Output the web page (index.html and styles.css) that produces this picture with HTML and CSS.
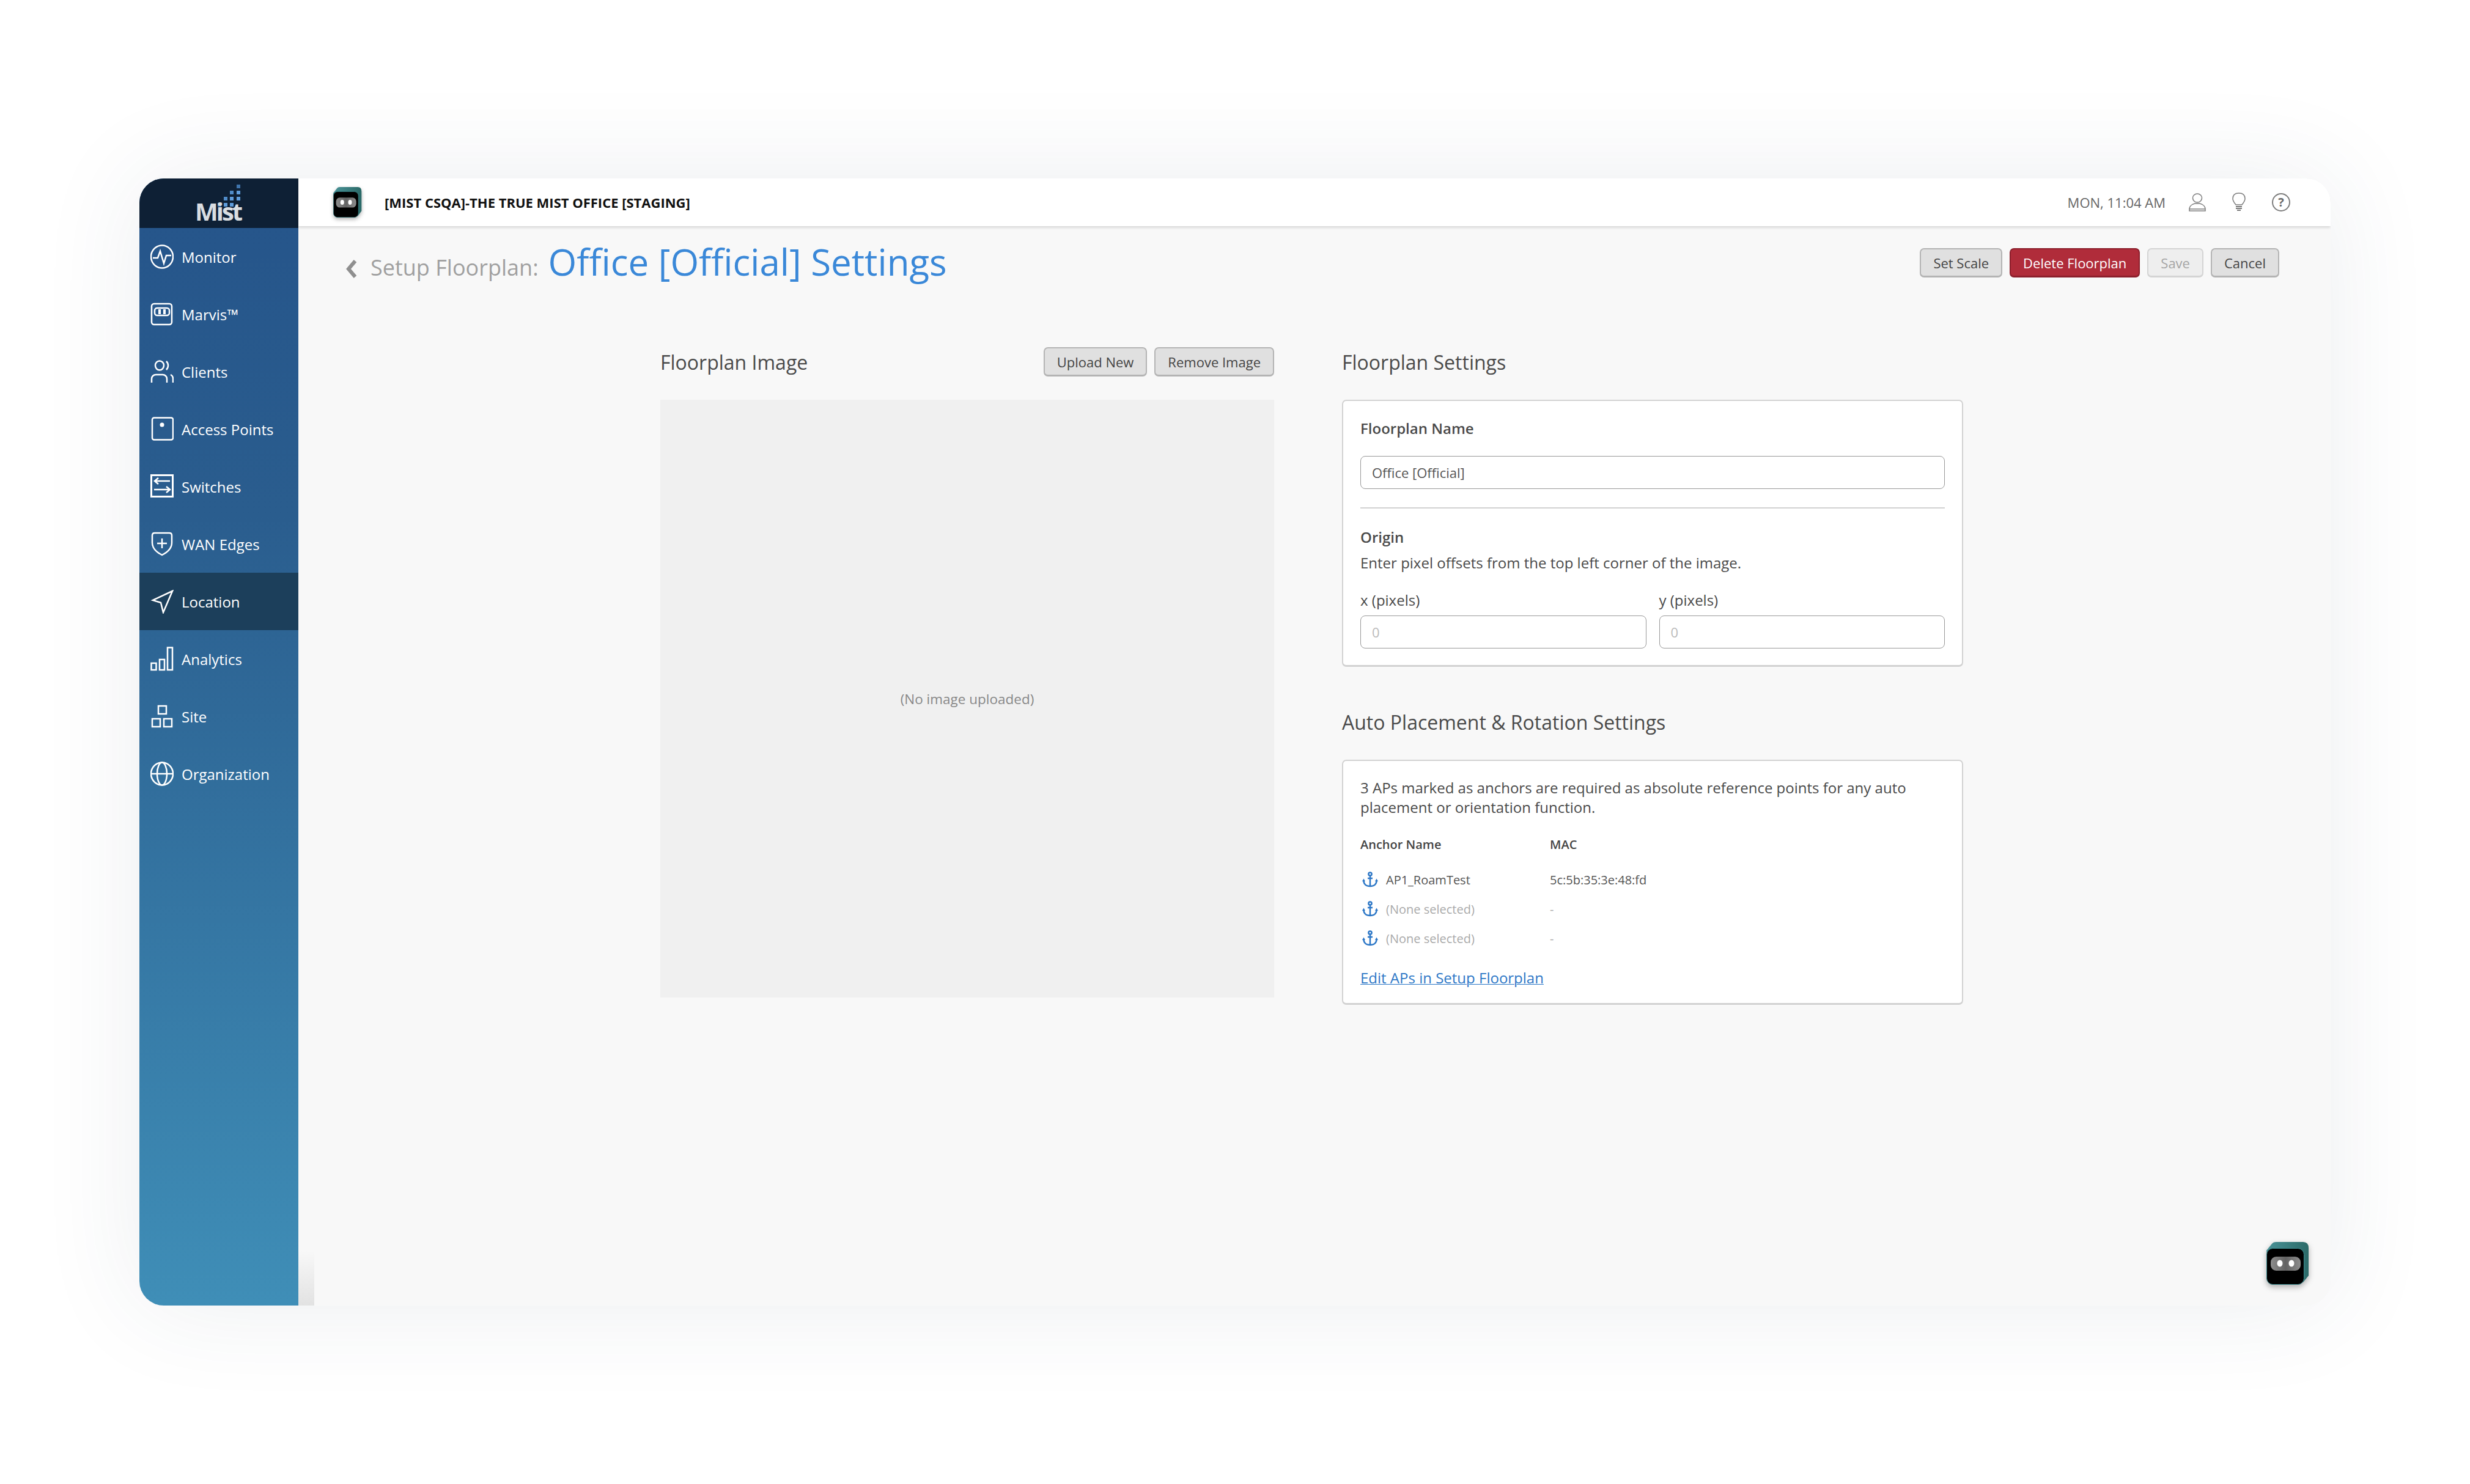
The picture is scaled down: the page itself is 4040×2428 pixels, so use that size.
FILE: index.html
```html
<!DOCTYPE html>
<html lang="en">
<head>
  <meta charset="UTF-8" />
  <title>Setup Floorplan: Office [Official] Settings</title>
  <link rel="stylesheet" href="styles.css">
</head>
<body>
  <svg class="defs" width="0" height="0" aria-hidden="true">
    <defs>
      <linearGradient id="bot-top" x1="0" y1="0" x2="1" y2="0">
        <stop offset="0" stop-color="#4a9398" />
        <stop offset="1" stop-color="#2b6a68" />
      </linearGradient>
      <linearGradient id="bot-visor" x1="0" y1="0" x2="1" y2="0">
        <stop offset="0" stop-color="#8d8d8d" />
        <stop offset=".5" stop-color="#636363" />
        <stop offset="1" stop-color="#8d8d8d" />
      </linearGradient>
      <symbol id="bot" viewBox="0 0 70 70">
        <path d="M0 14 L9 3 Q11 0 16 0 H60 Q69 0 69 10 V55 L60 66 H10 Z" fill="url(#bot-top)" />
        <rect x="0.5" y="10.5" width="61" height="59" rx="10" fill="#000" stroke="#3d8d92" />
        <rect x="7" y="24" width="49" height="23" rx="9" fill="url(#bot-visor)" />
        <ellipse cx="22" cy="35" rx="4.5" ry="5.5" fill="#fff" />
        <ellipse cx="41" cy="35" rx="4.5" ry="5.5" fill="#fff" />
      </symbol>
      <symbol id="anchor" viewBox="0 0 26 26">
        <g fill="none" stroke="#2e78c7" stroke-width="2.500">
          <circle cx="13" cy="4" r="2.6" />
          <path d="M13 7v17M9 11h8M2.5 15c0 5.5 4 9 10.500 9s10.500-3.500 10.500-9" />
        </g>
        <path d="M2.500 11.500 0 16h5zM23.500 11.500 21 16h5z" fill="#2e78c7" />
      </symbol>
    </defs>
  </svg>

  <div class="app">
    <aside class="sidebar">
      <div class="logo">
        <svg class="logo-dots" width="40" height="38" viewBox="0 0 40 38">
          <rect x="32" y="0" width="6" height="6" fill="#3f74ac" />
          <rect x="21" y="10" width="6" height="6" fill="#4f8bc8" />
          <rect x="32" y="10" width="6" height="6" fill="#5f9ddc" />
          <rect x="11" y="20" width="6" height="6" fill="#4f8bc8" />
          <rect x="21" y="20" width="6" height="6" fill="#5f9ddc" />
          <rect x="32" y="20" width="6" height="6" fill="#5f9ddc" />
          <rect x="1" y="30" width="6" height="6" fill="#4f8bc8" />
          <rect x="11" y="30" width="6" height="6" fill="#5f9ddc" />
          <rect x="21" y="30" width="6" height="6" fill="#5f9ddc" />
        </svg>
        <span class="logo-text">Mist</span>
      </div>
      <nav class="nav">
        <a class="nav-item">
          <svg class="nav-icon" viewBox="0 0 38 40"><ellipse cx="19" cy="20" rx="18" ry="18.500" /><path d="M4 22h8l4-11 6 20 4-13h8" /></svg>
          Monitor
        </a>
        <a class="nav-item">
          <svg class="nav-icon" viewBox="0 0 38 40"><rect x="2" y="3" width="33" height="34" rx="4" /><rect x="7" y="10" width="24" height="12" rx="4" /><path d="M15 12v8M23 12v8" stroke-width="4" /></svg>
          Marvis™
        </a>
        <a class="nav-item">
          <svg class="nav-icon" viewBox="0 0 38 40"><ellipse cx="15" cy="10" rx="7" ry="7.500" /><path d="M26 3c4 4 4 10 0 14M2 38v-6c0-4 3-7 7-7h11c4 0 7 3 7 7v6M33 25c2 1 4 3 4 7v6" /></svg>
          Clients
        </a>
        <a class="nav-item">
          <svg class="nav-icon" viewBox="0 0 38 40"><rect x="3" y="1.500" width="34" height="36" rx="3" /><circle cx="19" cy="13" r="3.500" fill="#fff" stroke="none" /></svg>
          Access Points
        </a>
        <a class="nav-item">
          <svg class="nav-icon" viewBox="0 0 38 40"><rect x="1.500" y="1.500" width="35" height="35" stroke-width="3" /><path d="M32 11H7M13 6l-6 5 6 5M6 25h26M26 20l6 5-6 5" stroke-width="2.500" /></svg>
          Switches
        </a>
        <a class="nav-item">
          <svg class="nav-icon" viewBox="0 0 38 40"><path d="M3 6q0-4 4-4h24q4 0 4 4v12c0 8-6 15-16 20C9 33 3 26 3 18z" /><path d="M11 19h16M19 11v16" /></svg>
          WAN Edges
        </a>
        <a class="nav-item is-active">
          <svg class="nav-icon" viewBox="0 0 38 40"><path d="M36 3 4 18l13 4 4 16z" /></svg>
          Location
        </a>
        <a class="nav-item">
          <svg class="nav-icon" viewBox="0 0 38 40"><rect x="1.500" y="27" width="8" height="11" /><rect x="15" y="21" width="8" height="17" /><rect x="28" y="1.500" width="8" height="36.500" /></svg>
          Analytics
        </a>
        <a class="nav-item">
          <svg class="nav-icon" viewBox="0 0 38 40"><rect x="13" y="3" width="13" height="13" /><rect x="3" y="24" width="13" height="13" /><rect x="22" y="24" width="13" height="13" /></svg>
          Site
        </a>
        <a class="nav-item">
          <svg class="nav-icon" viewBox="0 0 38 40"><ellipse cx="19" cy="20" rx="18" ry="18.500" /><ellipse cx="19" cy="20" rx="8" ry="18.500" /><path d="M1 20h36" /></svg>
          Organization
        </a>
      </nav>
    </aside>

    <div class="main">
      <header class="topbar">
        <svg class="topbar-bot" viewBox="0 0 70 70" preserveAspectRatio="none"><use href="#bot" /></svg>
        <span class="org-name">[MIST CSQA]-THE TRUE MIST OFFICE [STAGING]</span>
        <span class="clock">MON, 11:04 AM</span>
        <svg class="top-icon user" viewBox="0 0 28 30"><ellipse cx="14" cy="8" rx="7.500" ry="7" /><path d="M1 29v-3c0-5 5-8 9-9h8c4 1 9 4 9 9v3zM1 26h26" /></svg>
        <svg class="top-icon bulb" viewBox="0 0 22 32"><path d="M6 20C3 16 1 14 1 10 1 4 5 1 11 1s10 3 10 9c0 4-2 6-5 10z" /><path d="M6 23h10M6 26h10M8 29h6" stroke-width="2" /></svg>
        <span class="help">?</span>
      </header>

      <div class="page-head">
        <div class="crumbs">
          <svg class="back" width="19" height="30" viewBox="0 0 19 30"><path d="M15 2 4 15l11 13" /></svg>
          <span class="crumb-parent">Setup Floorplan:</span>
          <h1 class="crumb-title">Office [Official] Settings</h1>
        </div>
        <div class="btn-row">
          <button class="btn">Set Scale</button>
          <button class="btn btn-danger">Delete Floorplan</button>
          <button class="btn btn-disabled">Save</button>
          <button class="btn">Cancel</button>
        </div>
      </div>

      <div class="columns">
        <section class="col-image">
          <div class="section-head">
            <h2>Floorplan Image</h2>
            <div class="btn-row">
              <button class="btn">Upload New</button>
              <button class="btn">Remove Image</button>
            </div>
          </div>
          <div class="image-box">(No image uploaded)</div>
        </section>

        <section class="col-settings">
          <div class="section-head">
            <h2>Floorplan Settings</h2>
          </div>
          <div class="card card-settings">
            <div class="field-title">Floorplan Name</div>
            <div class="input">Office [Official]</div>
            <hr class="divider">
            <div class="field-title origin">Origin</div>
            <p class="hint">Enter pixel offsets from the top left corner of the image.</p>
            <div class="xy">
              <label class="xy-field">x (pixels)<span class="input is-empty">0</span></label>
              <label class="xy-field">y (pixels)<span class="input is-empty">0</span></label>
            </div>
          </div>

          <div class="section-head second">
            <h2>Auto Placement &amp; Rotation Settings</h2>
          </div>
          <div class="card card-auto">
            <p class="intro">3 APs marked as anchors are required as absolute reference points for any auto placement or orientation function.</p>
            <div class="anchor-row anchor-head">
              <span class="anchor-name">Anchor Name</span>
              <span>MAC</span>
            </div>
            <div class="anchor-row">
              <span class="anchor-name"><svg class="anchor-icon"><use href="#anchor" /></svg>AP1_RoamTest</span>
              <span>5c:5b:35:3e:48:fd</span>
            </div>
            <div class="anchor-row is-none">
              <span class="anchor-name"><svg class="anchor-icon"><use href="#anchor" /></svg>(None selected)</span>
              <span>-</span>
            </div>
            <div class="anchor-row is-none">
              <span class="anchor-name"><svg class="anchor-icon"><use href="#anchor" /></svg>(None selected)</span>
              <span>-</span>
            </div>
            <a class="edit-link">Edit APs in Setup Floorplan</a>
          </div>
        </section>
      </div>

      <div class="side-fade"></div>
      <svg class="chat-bot" viewBox="0 0 70 70"><use href="#bot" /></svg>
    </div>
  </div>
</body>
</html>
```

FILE: styles.css
```css
* {
  box-sizing: border-box;
}
html, body {
  margin: 0;
  background-color: #fff;
}
body {
  font-family: "Open Sans", "Noto Sans", sans-serif;
  color: #4a4a4a;
  padding: 292px 228px;
  width: 4040px;
  height: 2428px;
}
.defs {
  position: absolute;
}
.app {
  display: flex;
  height: 1844px;
  border-radius: 40px;
  background-color: #f8f8f8;
  box-shadow: 0 0 170px rgba(40, 70, 90, 0.09);
  overflow: hidden;
}

/* sidebar */
.sidebar {
  width: 260px;
  flex: none;
  display: flex;
  flex-direction: column;
  background: linear-gradient(180deg, #25548a 0%, #2a5d8e 30%, #3f8eb7 100%);
}
.logo {
  height: 81px;
  background-color: #0e2035;
  position: relative;
  text-align: center;
}
.logo-dots {
  position: absolute;
  left: 127px;
  top: 10px;
}
.logo-text {
  position: absolute;
  left: 91px;
  top: 27px;
  font-size: 40px;
  line-height: 54px;
  font-weight: 700;
  color: #d9dde1;
  letter-spacing: -3px;
}
.nav-item {
  height: 94px;
  display: flex;
  align-items: center;
  gap: 13px;
  padding-left: 18px;
  color: #fff;
  font-size: 24px;
}
.nav-item.is-active {
  background-color: #1c3f5b;
}
.nav-icon {
  width: 38px;
  height: 40px;
  flex: none;
  fill: none;
  stroke: #fff;
  stroke-width: 2.500;
}

/* main column */
.main {
  flex: 1;
  position: relative;
}
.topbar {
  height: 78px;
  background-color: #fff;
  box-shadow: 0 2px 5px rgba(0, 0, 0, 0.16);
  display: flex;
  align-items: center;
  padding: 0 66px 0 57px;
  position: relative;
}
.topbar-bot {
  width: 47px;
  height: 50px;
  margin-right: 37px;
  filter: drop-shadow(0 3px 3px rgba(0, 0, 0, 0.3));
}
.org-name {
  font-size: 22px;
  font-weight: 700;
  color: #111;
  flex: 1;
}
.clock {
  font-size: 22px;
  color: #666;
  margin-right: 38px;
}
.top-icon {
  fill: none;
  stroke: #7d7d7d;
  stroke-width: 1.5;
}
.top-icon.user {
  width: 28px;
  height: 30px;
  margin-right: 43px;
}
.top-icon.bulb {
  width: 22px;
  height: 32px;
  margin-right: 43px;
}
.help {
  width: 30px;
  height: 30px;
  border: 2px solid #7d7d7d;
  border-radius: 50%;
  color: #6a6a6a;
  font-size: 20px;
  font-weight: 700;
  line-height: 26px;
  text-align: center;
}
.page-head {
  display: flex;
  justify-content: space-between;
  align-items: flex-start;
  padding: 36px 84px 0 78px;
  height: 198px;
}
.crumbs {
  display: flex;
  align-items: baseline;
  line-height: 48px;
  margin-top: -2px;
}
.back {
  fill: none;
  stroke: #8f8f8f;
  stroke-width: 6;
  margin-right: 21px;
  align-self: center;
  position: relative;
  top: 7px;
}
.crumb-parent {
  font-size: 36px;
  color: #a0a0a0;
  margin-right: 16px;
}
.crumb-title {
  margin: 0;
  font-size: 60px;
  line-height: 48px;
  font-weight: 400;
  color: #3a88d8;
}
.btn-row {
  display: flex;
  gap: 12px;
}
.btn {
  height: 48px;
  padding: 0 20px;
  font-family: inherit;
  font-size: 22px;
  color: #444;
  background-color: #e0e0e0;
  border: 2px solid #b4b4b4;
  border-bottom-width: 3px;
  border-radius: 7px;
}
.btn-danger {
  background-color: #b02c3a;
  border-color: #8c1f2c;
  color: #fff;
}
.btn-disabled {
  background-color: #eee;
  border-color: #d4d4d4;
  color: #a5a5a5;
}
.columns {
  display: flex;
  padding-left: 592px;
  gap: 111px;
}
.col-image {
  width: 1004px;
}
.col-settings {
  width: 1016px;
}
.section-head {
  display: flex;
  justify-content: space-between;
  align-items: center;
  height: 48px;
  margin-bottom: 38px;
}
.section-head.second {
  margin-top: 66px;
}
.section-head h2 {
  margin: 0;
  font-size: 32px;
  font-weight: 400;
  color: #4a4a4a;
}
.image-box {
  height: 978px;
  background-color: #f0f0f0;
  display: flex;
  align-items: center;
  justify-content: center;
  font-size: 22.500px;
  color: #888;
}

/* cards */
.card {
  background-color: #fff;
  border: 2px solid #d2d2d2;
  border-bottom-width: 3px;
  border-radius: 7px;
  padding: 0 28px;
}
.card-settings {
  height: 437px;
  padding-top: 28px;
}
.field-title {
  font-size: 24px;
  line-height: 34px;
  font-weight: 600;
}
.input {
  display: block;
  height: 54px;
  margin-top: 28px;
  padding-left: 18px;
  line-height: 52px;
  font-size: 22px;
  font-weight: 400;
  color: #555;
  background-color: #fff;
  border: 1.500px solid #999;
  border-radius: 8px;
}
.input.is-empty {
  color: #bbb;
  margin-top: 8px;
}
.divider {
  border: 0;
  height: 2px;
  background-color: #d2d2d2;
  margin: 30px 0 0;
}
.field-title.origin {
  margin-top: 30px;
}
.hint {
  margin: 8px 0 0;
  font-size: 24px;
  line-height: 34px;
}
.xy {
  display: flex;
  gap: 21px;
  margin-top: 27px;
}
.xy-field {
  flex: 1;
  font-size: 24px;
  line-height: 34px;
}
.card-auto {
  height: 401px;
  padding-top: 28px;
}
.intro {
  margin: 0 0 27px;
  font-size: 24px;
  line-height: 32px;
}
.anchor-row {
  display: flex;
  align-items: center;
  height: 48px;
  font-size: 20px;
  color: #555;
}
.anchor-head {
  font-weight: 600;
  color: #444;
  height: 34px;
  margin-bottom: 17px;
}
.anchor-name {
  width: 310px;
  display: flex;
  align-items: center;
}
.anchor-icon {
  width: 26px;
  height: 26px;
  margin: 0 13px 0 3px;
}
.is-none {
  color: #aaa;
}
.edit-link {
  display: block;
  margin-top: 24px;
  font-size: 24px;
  line-height: 34px;
  color: #2e78c7;
  text-decoration: underline;
  text-decoration-thickness: 1px;
}

/* overlays */
.side-fade {
  position: absolute;
  left: 0;
  bottom: 0;
  width: 26px;
  height: 90px;
  background: linear-gradient(180deg, rgba(228, 228, 228, 0), #e2e2e2);
}
.chat-bot {
  position: absolute;
  left: 3219px;
  top: 1740px;
  width: 70px;
  height: 70px;
  filter: drop-shadow(0 4px 5px rgba(0, 0, 0, 0.3));
}
```
